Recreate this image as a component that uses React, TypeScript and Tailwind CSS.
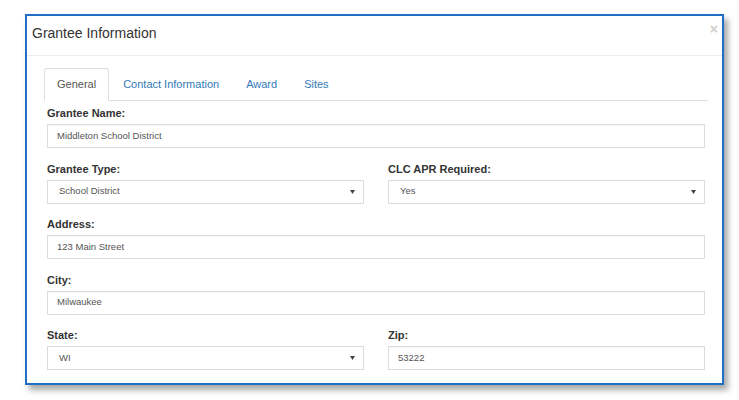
import React from "react";

function Label({ children }: { children: React.ReactNode }) {
  return (
    <div className="h-[14px] mb-[4px] text-[11px] leading-[14px] font-bold text-[#333]">{children}</div>
  );
}

function Input({ value }: { value: string }) {
  return (
    <div className="h-[24px] border border-[#d9dce1] bg-white pl-[9px] flex items-center text-[9.5px] text-[#555] shadow-[inset_0_1px_1px_rgba(0,0,0,0.05)]">
      {value}
    </div>
  );
}

function Select({ value }: { value: string }) {
  return (
    <div className="h-[24px] border border-[#d9dce1] bg-white pl-[11px] pr-[7px] flex items-center justify-between text-[9.5px] text-[#555]">
      <span>{value}</span>
      <svg width="5" height="4" viewBox="0 0 5 4" className="mr-[1px]">
        <path d="M0 0 H5 L2.5 4 Z" fill="#444" />
      </svg>
    </div>
  );
}

function Group({ children, last }: { children: React.ReactNode; last?: boolean }) {
  return <div className={last ? "" : "mb-[13.5px]"}>{children}</div>;
}

export default function App() {
  return (
    <div className="w-[739px] h-[400px] bg-white pl-[25px] pt-[14px] font-['Liberation_Sans',Arial,sans-serif]">
      <div className="w-[699px] border-2 border-[#1f70c4] bg-white shadow-[4px_5px_6px_rgba(0,0,0,0.35)]">
        {/* header */}
        <div className="h-[40px] border-b border-[#ececec] flex items-start justify-between pl-[5px] pr-[4px]">
          <div className="pt-[8px] text-[14px] leading-[18px] text-[#333]">Grantee Information</div>
          <div className="pt-[6px] text-[14px] leading-[14px] font-bold text-[#cfcfcf]">×</div>
        </div>
        {/* body */}
        <div className="pt-[12px] pb-[13px] pl-[17px] pr-[14px]">
          <div className="flex h-[33px] border-b border-[#dddddd] text-[11px]">
            <div className="h-[33px] px-[12px] mr-[2px] border border-[#dddddd] border-b-white rounded-t-[3px] bg-white flex items-center text-[#555]">
              General
            </div>
            <div className="h-[32px] px-[12px] mr-[3px] flex items-center text-[#337ab7]">Contact Information</div>
            <div className="h-[32px] px-[12px] mr-[3px] flex items-center text-[#337ab7]">Award</div>
            <div className="h-[32px] px-[12px] mr-[3px] flex items-center text-[#337ab7]">Sites</div>
          </div>
          <div className="px-[3px] pt-[5px]">
            <Group>
              <Label>Grantee Name:</Label>
              <Input value="Middleton School District" />
            </Group>
            <Group>
              <div className="grid grid-cols-2 gap-x-[24px]">
                <div>
                  <Label>Grantee Type:</Label>
                  <Select value="School District" />
                </div>
                <div>
                  <Label>CLC APR Required:</Label>
                  <Select value="Yes" />
                </div>
              </div>
            </Group>
            <Group>
              <Label>Address:</Label>
              <Input value="123 Main Street" />
            </Group>
            <Group>
              <Label>City:</Label>
              <Input value="Milwaukee" />
            </Group>
            <Group last>
              <div className="grid grid-cols-2 gap-x-[24px]">
                <div>
                  <Label>State:</Label>
                  <Select value="WI" />
                </div>
                <div>
                  <Label>Zip:</Label>
                  <Input value="53222" />
                </div>
              </div>
            </Group>
          </div>
        </div>
      </div>
    </div>
  );
}
